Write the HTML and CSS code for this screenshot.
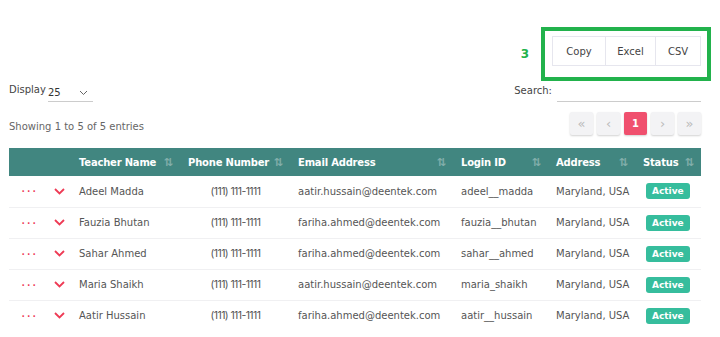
FILE: index.html
```html
<!DOCTYPE html>
<html lang="en">
  <head>
    <meta charset="UTF-8" />
    <meta name="viewport" content="width=device-width, initial-scale=1.0" />
    <title>Teachers</title>
    <link rel="stylesheet" href="styles.css">
  </head>
  <body>
    <div class="page">
      <div class="export-bar">
        <span class="step-label">3</span>
        <div class="highlight-box">
          <div class="btn-group">
            <button class="export-btn copy">Copy</button>
            <button class="export-btn excel">Excel</button>
            <button class="export-btn csv">CSV</button>
          </div>
        </div>
      </div>

      <div class="controls">
        <div class="display-control">
          <span class="label">Display</span>
          <div class="select-box">
            <span>25</span>
            <svg class="select-caret" width="9" height="6" viewBox="0 0 9 6"><path d="M1 1l3.5 3.5L8 1" fill="none" stroke="#666" stroke-width="1"/></svg>
          </div>
        </div>
        <div class="search-control">
          <span class="label">Search:</span>
          <div class="search-input"></div>
        </div>
      </div>

      <div class="info-row">
        <span class="entries-info">Showing 1 to 5 of 5 entries</span>
        <div class="pagination">
          <button class="page-btn disabled">&laquo;</button>
          <button class="page-btn disabled">&lsaquo;</button>
          <button class="page-btn active">1</button>
          <button class="page-btn disabled">&rsaquo;</button>
          <button class="page-btn disabled">&raquo;</button>
        </div>
      </div>

      <table class="data-table">
        <thead>
          <tr>
            <th class="col-dots"></th>
            <th class="col-toggle"></th>
            <th class="col-name"><span>Teacher Name</span><i class="sort">⇅</i></th>
            <th class="col-phone"><span>Phone Number</span><i class="sort">⇅</i></th>
            <th class="col-email"><span>Email Address</span><i class="sort">⇅</i></th>
            <th class="col-login"><span>Login ID</span><i class="sort">⇅</i></th>
            <th class="col-address"><span>Address</span><i class="sort">⇅</i></th>
            <th class="col-status"><span>Status</span><i class="sort">⇅</i></th>
          </tr>
        </thead>
        <tbody id="tableBody"></tbody>
      </table>
    </div>

    <script>
      const teachers = [
        ["Adeel Madda", "aatir.hussain@deentek.com", "adeel__madda"],
        ["Fauzia Bhutan", "fariha.ahmed@deentek.com", "fauzia__bhutan"],
        ["Sahar Ahmed", "fariha.ahmed@deentek.com", "sahar__ahmed"],
        ["Maria Shaikh", "aatir.hussain@deentek.com", "maria_shaikh"],
        ["Aatir Hussain", "fariha.ahmed@deentek.com", "aatir__hussain"]
      ];

      const tbody = document.getElementById("tableBody");
      teachers.forEach(([name, email, login]) => {
        const tr = document.createElement("tr");
        tr.innerHTML = `
          <td class="col-dots"><span class="dots">&middot;&middot;&middot;</span></td>
          <td class="col-toggle">
            <svg width="11" height="7" viewBox="0 0 11 7"><path d="M1 1l4.5 4.5L10 1" fill="none" stroke="#ee3b55" stroke-width="1.8"/></svg>
          </td>
          <td>${name}</td>
          <td class="col-phone"><span class="phone">(111) 111-1111</span></td>
          <td>${email}</td>
          <td>${login}</td>
          <td>Maryland, USA</td>
          <td><span class="badge">Active</span></td>
        `;
        tbody.appendChild(tr);
      });
    </script>
  </body>
</html>
```

FILE: styles.css
```css
* {
  margin: 0;
  padding: 0;
  box-sizing: border-box;
}

body {
  font-family: "DejaVu Sans", sans-serif;
  background: white;
  color: #555;
  font-size: 10px;
}

.page {
  padding: 0 19px 0 9px;
}

.export-bar {
  display: flex;
  justify-content: flex-end;
  align-items: center;
  padding-top: 27px;
  margin-right: -10px;
}

.step-label {
  color: #22b24c;
  font-weight: bold;
  font-size: 12px;
  margin-right: 12px;
}

.highlight-box {
  border: 4px solid #22b24c;
  padding: 5px 6px 11px 7px;
}

.btn-group {
  display: flex;
  border: 1px solid #e6e6ee;
}

.export-btn {
  background: white;
  border: none;
  border-left: 1px solid #e6e6ee;
  font-family: inherit;
  font-size: 10px;
  color: #444;
  height: 28px;
}

.export-btn:first-child {
  border-left: none;
}

.copy {
  width: 52px;
}

.excel {
  width: 50px;
}

.csv {
  width: 45px;
}

.controls {
  display: flex;
  justify-content: space-between;
  align-items: flex-start;
  height: 24px;
}

.display-control {
  display: flex;
  align-items: flex-start;
}

.label {
  color: #444;
  font-size: 10px;
  line-height: 14px;
}

.display-control .label {
  margin-top: 2px;
}

.select-box {
  margin-left: 2px;
  margin-top: 3px;
  width: 45px;
  height: 18px;
  border-bottom: 1px solid #ccc;
  display: flex;
  justify-content: space-between;
  align-items: center;
  padding-right: 5px;
  color: #333;
}

.search-control {
  display: flex;
  align-items: flex-start;
  margin-top: 3px;
}

.search-input {
  width: 144px;
  height: 18px;
  border-bottom: 1px solid #ccc;
  margin-left: 5px;
}

.info-row {
  display: flex;
  justify-content: space-between;
  align-items: center;
  margin-top: 7px;
  height: 23px;
}

.entries-info {
  color: #666;
  font-size: 10px;
  margin-top: 5px;
}

.pagination {
  display: flex;
  gap: 4px;
}

.page-btn {
  width: 23px;
  height: 23px;
  border: none;
  border-radius: 2px;
  background: #f3f3f5;
  color: #bbb;
  font-size: 13px;
  font-family: inherit;
  box-shadow: 0 1px 2px rgba(0, 0, 0, 0.18);
}

.page-btn.active {
  background: #f0506e;
  color: white;
  font-size: 10px;
  font-weight: bold;
}

.data-table {
  width: 100%;
  margin-top: 13px;
  border-collapse: collapse;
  table-layout: fixed;
}

.data-table thead tr {
  background: #418680;
}

.data-table th {
  height: 28px;
  color: white;
  font-weight: bold;
  font-size: 10px;
  letter-spacing: -0.2px;
  text-align: left;
  padding: 0 7px 0 8px;
  white-space: nowrap;
}

.data-table th span {
  vertical-align: middle;
}

.sort {
  float: right;
  font-style: normal;
  color: rgba(255, 255, 255, 0.35);
  font-size: 11px;
}

.data-table td {
  height: 31px;
  padding: 0 7px 0 8px;
  font-size: 10px;
  color: #555;
  border-bottom: 1px solid #f0f0f2;
  white-space: nowrap;
}

.data-table tr:last-child td {
  border-bottom: none;
}

.col-dots {
  width: 35px;
}

.col-toggle {
  width: 27px;
}

.col-name {
  width: 109px;
}

.col-phone {
  width: 110px;
}

td.col-phone {
  text-align: center;
}

.phone {
  font-family: Inter, sans-serif;
  font-size: 10.5px;
  letter-spacing: -0.6px;
}

.col-email {
  width: 163px;
}

.col-login {
  width: 95px;
}

.col-address {
  width: 87px;
}

.col-status {
  width: 66px;
}

.dots {
  color: #ee3b55;
  font-size: 14px;
  letter-spacing: 1px;
  margin-left: 4px;
}

.col-toggle svg {
  display: block;
  margin-left: 2px;
}

.badge {
  display: inline-block;
  background: #36bd9d;
  color: white;
  font-size: 9px;
  font-weight: bold;
  padding: 3px 6px;
  border-radius: 3px;
  margin-left: 3px;
}
```
